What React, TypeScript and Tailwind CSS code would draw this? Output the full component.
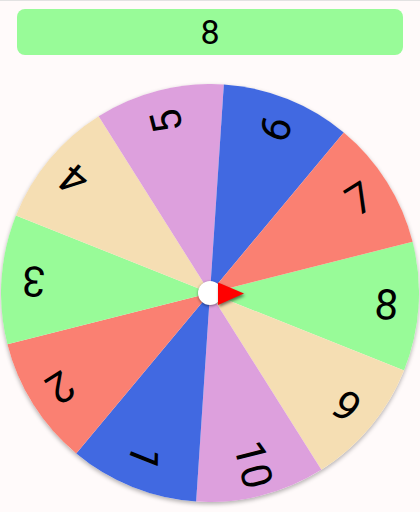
import React from "react";

const SIZE = 418;
const C = SIZE / 2;
const R = SIZE / 2;
const LABEL_R = 177;
const OFFSET = 3.8;

const SEGMENTS = [
  { label: "8", color: "#98fb98" },
  { label: "9", color: "#f5deb3" },
  { label: "10", color: "#dda0dd" },
  { label: "1", color: "#4169e1" },
  { label: "2", color: "#fa8072" },
  { label: "3", color: "#98fb98" },
  { label: "4", color: "#f5deb3" },
  { label: "5", color: "#dda0dd" },
  { label: "6", color: "#4169e1" },
  { label: "7", color: "#fa8072" },
];

const rad = (d: number) => (d * Math.PI) / 180;

const slicePath = (from: number, to: number) => {
  const x0 = C + R * Math.cos(rad(from));
  const y0 = C + R * Math.sin(rad(from));
  const x1 = C + R * Math.cos(rad(to));
  const y1 = C + R * Math.sin(rad(to));
  return `M ${C} ${C} L ${x0} ${y0} A ${R} ${R} 0 0 1 ${x1} ${y1} Z`;
};

const Wheel = () => {
  const step = 360 / SEGMENTS.length;
  return (
    <div className="relative ml-[1px] w-[418px] h-[418px] rounded-full shadow-[0_2px_4px_rgba(0,0,0,0.3)]">
      <svg width={SIZE} height={SIZE} viewBox={`0 0 ${SIZE} ${SIZE}`} className="block">
        {SEGMENTS.map((s, i) => {
          const mid = OFFSET + step * i;
          return (
            <path
              key={`p${i}`}
              d={slicePath(mid - step / 2, mid + step / 2)}
              fill={s.color}
            />
          );
        })}
        {SEGMENTS.map((s, i) => {
          const mid = OFFSET + step * i;
          return (
            <text
              key={`t${i}`}
              x={C + LABEL_R}
              y={C}
              transform={`rotate(${mid} ${C} ${C})`}
              textAnchor="middle"
              dominantBaseline="central"
              fontSize={42}
              fontFamily="Roboto, 'Liberation Sans', sans-serif"
              fill="#000"
            >
              {s.label}
            </text>
          );
        })}
      </svg>

      {/* hub + pointer */}
      <div className="absolute left-[197px] top-[197px] w-[24px] h-[24px] rounded-full bg-white shadow-[0_1px_3px_rgba(0,0,0,0.45)]" />
      <svg
        width="28"
        height="26"
        viewBox="0 0 28 26"
        className="absolute left-[216px] top-[197px] drop-shadow-[1px_2px_1.5px_rgba(0,0,0,0.5)]"
      >
        <polygon points="1,1.5 27,12.5 1,24" fill="#ff0000" />
      </svg>
    </div>
  );
};

export default function App() {
  return (
    <div
      className="min-h-[512px] w-[420px] bg-[#fffafa] border-t border-[#e2e2e2] overflow-hidden"
      style={{ fontFamily: "Roboto, 'Liberation Sans', sans-serif" }}
    >
      <div className="mx-[17px] mt-[8px] h-[46px] rounded-lg bg-[#98fb98] flex items-center justify-center text-[34px] leading-none text-black">
        8
      </div>
      <div className="mt-[29px]">
        <Wheel />
      </div>
    </div>
  );
}
